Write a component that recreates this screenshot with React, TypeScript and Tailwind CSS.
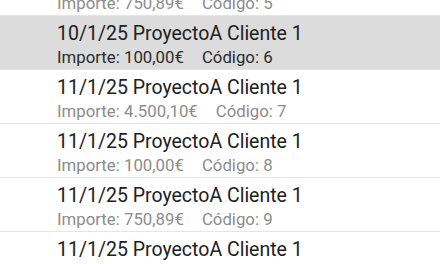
import React from 'react';

type Entry = { fecha: string; importe: string; codigo: number };

const entries: Entry[] = [
  { fecha: '10/1/25', importe: '750,89€', codigo: 5 },
  { fecha: '10/1/25', importe: '100,00€', codigo: 6 },
  { fecha: '11/1/25', importe: '4.500,10€', codigo: 7 },
  { fecha: '11/1/25', importe: '100,00€', codigo: 8 },
  { fecha: '11/1/25', importe: '750,89€', codigo: 9 },
  { fecha: '11/1/25', importe: '1.200,00€', codigo: 10 },
];

const selected = 6;

export default function App() {
  return (
    <div className="h-[264px] w-[440px] overflow-hidden bg-white font-['Roboto',sans-serif]">
      <ul className="-mt-[38px]">
        {entries.map((e) => {
          const active = e.codigo === selected;
          return (
            <li
              key={e.codigo}
              className={`flex h-[54px] flex-col border-b border-[#e6e6e6] pl-[57px] pt-[5px] ${active ? 'bg-[#dcdcdc]' : 'bg-white'}`}
            >
              <span className="text-[19.5px] leading-[25px] text-[#212121]">
                {e.fecha} ProyectoA Cliente 1
              </span>
              <span className={`mt-[3px] flex gap-[18px] text-[16.8px] leading-[17px] ${active ? 'text-[#2b2b2b]' : 'text-[#8c8c8c]'}`}>
                <span>Importe: {e.importe}</span>
                <span>Código: {e.codigo}</span>
              </span>
            </li>
          );
        })}
      </ul>
    </div>
  );
}
